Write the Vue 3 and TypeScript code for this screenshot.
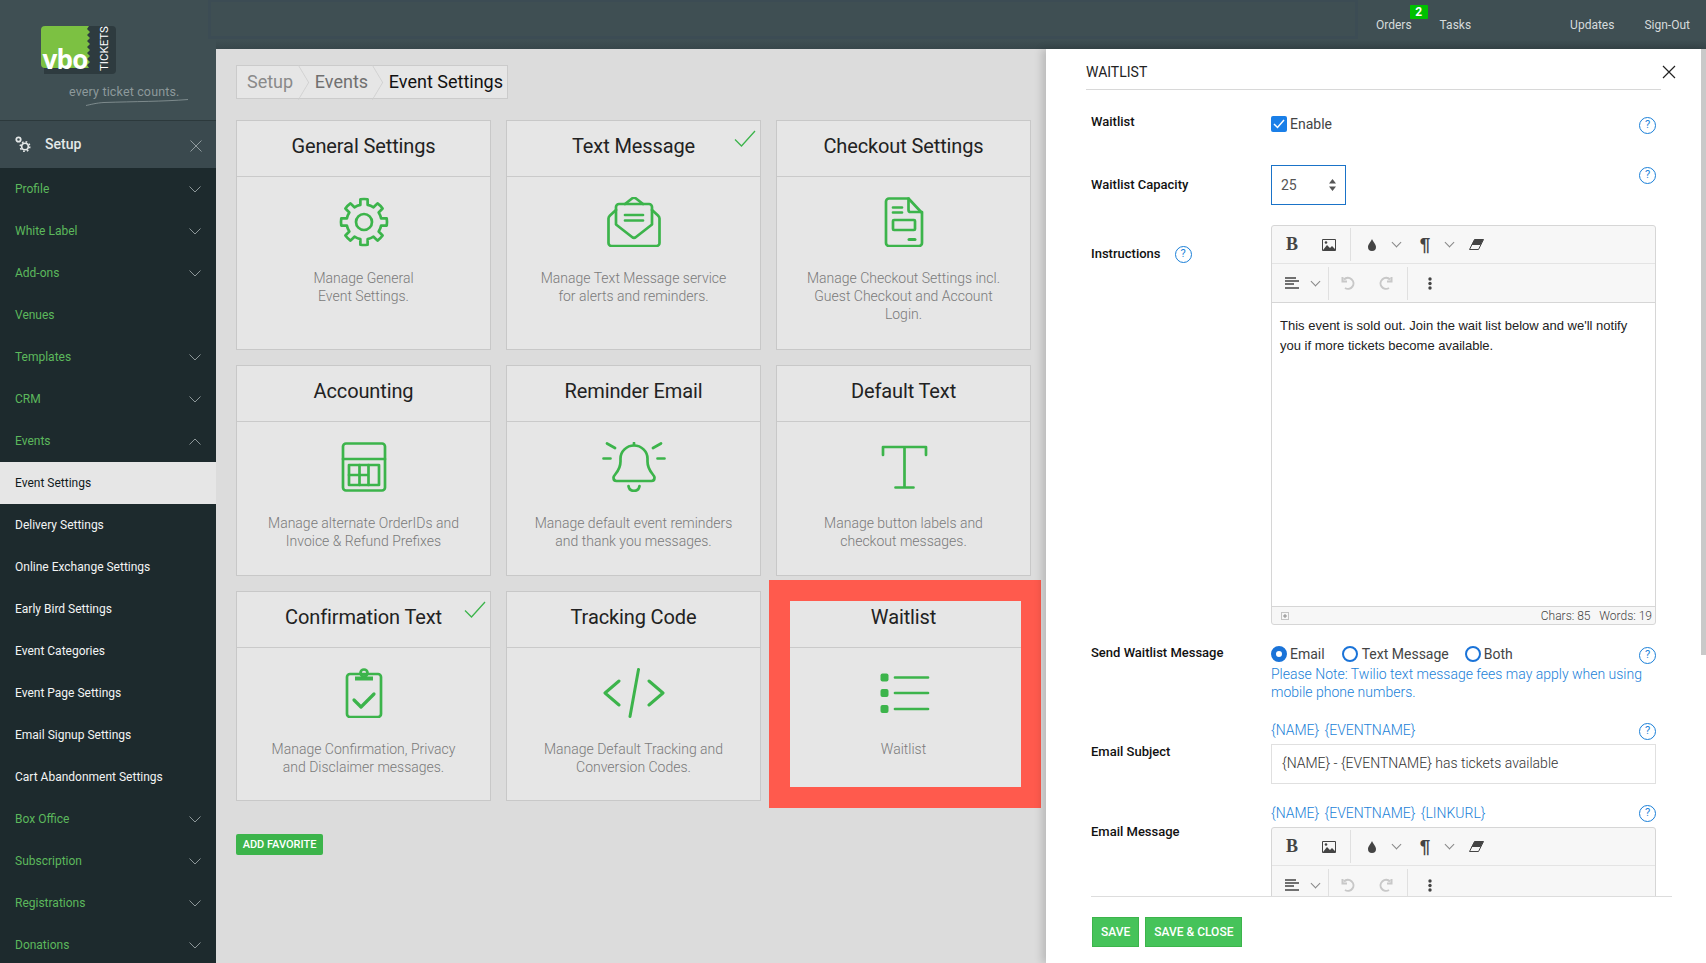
<template>
  <div class="page">
    <aside class="sidebar">
      <div class="logo">
        <svg width="216" height="120" viewBox="0 0 216 120">
          <path d="M47 26h68a4 4 0 0 1 4 4v40a4 4 0 0 1-4 4H47z" fill="#2e3b3f" transform="translate(-3 0)" />
          <path d="M45 26h44l-2 3 3 3-3 3 3 3-3 3 3 3-3 3 3 3-3 3 3 3-3 3 3 3-3 3 2 3H45a4 4 0 0 1-4-4V30a4 4 0 0 1 4-4z" fill="#7cc142" />
          <text x="42.5" y="68.500" class="logo-vbo">vbo</text>
          <text x="0" y="0" transform="translate(108 71) rotate(-90)" class="logo-tickets">TICKETS</text>
          <text x="69" y="96" class="logo-tag">every ticket counts.</text>
          <path d="M86 105.500c5-1 10-2.500 18-3 30-1 60-1 84-3" fill="none" stroke="#8d999b" stroke-width="0.8" />
        </svg>
      </div>
      <div class="setup-row">
        <svg class="setup-gears" width="16" height="16" viewBox="0 0 16 16" fill="none" stroke="#e4e8e8">
          <circle cx="3.500" cy="3.500" r="2.200" stroke-width="1.800" />
          <circle cx="10" cy="10.500" r="3.300" stroke-width="1.600" />
          <circle cx="10" cy="10.500" r="4.800" stroke-width="1.500" stroke-dasharray="1.700 2.070" />
        </svg>
        <span>Setup</span>
        <svg class="setup-x" width="12" height="12" viewBox="0 0 12 12" stroke="#9aa5a7" stroke-width="0.9">
          <path d="M0.500 0.500l11 11M11.500 0.500l-11 11" />
        </svg>
      </div>
      <ul class="side-nav">
        <li
          v-for="item in navItems"
          :key="item.label"
          :class="{ child: item.child, active: item.active }"
        >
          <span>{{ item.label }}</span>
          <svg v-if="item.chevron" width="12" height="7" viewBox="0 0 12 7" fill="none" stroke="#98a3a5" stroke-width="0.9">
            <path :d="item.chevron === 'up' ? 'M0.500 6.500L6 1l5.500 5.500' : 'M0.500 0.500L6 6l5.500-5.500'" />
          </svg>
        </li>
      </ul>
    </aside>

    <div class="right-col">
      <header class="topbar">
        <div class="search-box"></div>
        <nav class="top-nav">
          <a class="orders">Orders<b class="badge">2</b></a>
          <a class="tasks">Tasks</a>
          <a class="updates">Updates</a>
          <a class="signout">Sign-Out</a>
        </nav>
      </header>

      <div class="content">
        <main class="main">
          <div class="crumbs">
            <span class="crumb">Setup</span>
            <span class="crumb mid">Events</span>
            <span class="crumb current">Event Settings</span>
          </div>

          <div class="cards">
            <section v-for="card in cards" :key="card.title" class="card">
              <h2>{{ card.title }}</h2>
              <svg v-if="card.done" class="done" width="22" height="17" viewBox="0 0 22 17" fill="none" stroke="#3cb44b" stroke-width="1.300">
                <path d="M1 9.500L7.500 16 21 1" />
              </svg>
              <div class="card-body">
                <svg
                  width="64"
                  height="50"
                  viewBox="0 0 64 50"
                  fill="none"
                  stroke="#3cb44b"
                  stroke-width="2.700"
                  stroke-linecap="round"
                  stroke-linejoin="round"
                >
                  <template v-if="card.icon === 'gear'">
                    <path :d="gearPath" />
                    <circle cx="32" cy="25" r="8" />
                  </template>
                  <template v-else-if="card.icon === 'mail'">
                    <path d="M14 13l-6 5.500c-1 1-1.500 2-1.500 3V46a3 3 0 0 0 3 3h45a3 3 0 0 0 3-3V21.500c0-1-.5-2-1.500-3L50 13" />
                    <path d="M14 27.500V10a3 3 0 0 1 3-3h30a3 3 0 0 1 3 3v17.500L34 40a3 3 0 0 1-4 0L14 27.500z" />
                    <path d="M23 7l7-5.500a3 3 0 0 1 4 0L41 7" />
                    <path d="M23 18h18M23 23.500h18" />
                  </template>
                  <template v-else-if="card.icon === 'doc'">
                    <path d="M17 1.500h19.500L50 16v30a3 3 0 0 1-3 3H17a3 3 0 0 1-3-3V4.500a3 3 0 0 1 3-3z" />
                    <path d="M36.500 1.500V13a2 2 0 0 0 2 2H50" />
                    <path d="M21 10.500h9M21 15.500h9" />
                    <rect x="21" y="23" width="22" height="10" rx="1" />
                    <path d="M37 42.500h6" stroke-width="3" />
                  </template>
                  <template v-else-if="card.icon === 'table'">
                    <rect x="11" y="1.500" width="42" height="47" rx="3" />
                    <path d="M11 17h42" />
                    <rect x="17" y="23" width="30" height="20" />
                    <path d="M27.500 23v20M36.500 23v20M17 33h19.500" />
                  </template>
                  <template v-else-if="card.icon === 'bell'">
                    <path d="M11.500 35.500c0-3 7-6 7-16v-3c0-7 6-13 13.500-13s13.500 6 13.500 13v3c0 10 7 13 7 16 0 2-1 3.500-3 3.500H14.500c-2 0-3-1.500-3-3.500z" />
                    <path d="M32 1v2M26.500 44c1 6.500 10 6.500 11 0" />
                    <path d="M1.500 16.500h7M55.500 16.500h7M5 1.500l8 4.500M59 1.500l-8 4.500" />
                  </template>
                  <template v-else-if="card.icon === 'clipboard'">
                    <rect x="15" y="6" width="34" height="43" rx="3" />
                    <path d="M23 10.500h18" stroke-width="4" stroke-linecap="butt" />
                    <circle cx="32" cy="5" r="3.500" />
                    <path d="M22 32l7 7 13-13" stroke-width="3.200" />
                  </template>
                  <template v-else-if="card.icon === 'code'">
                    <path d="M17 13L3 25l14 12M47 13l14 12-14 12M36.500 1.500L28 48.500" stroke-width="3" />
                  </template>
                  <template v-else-if="card.icon === 'text'">
                    <path d="M11 13V5h43v8M32.500 5v40.500M23.500 45.500h18" />
                  </template>
                  <template v-else>
                    <rect x="8.500" y="5.500" width="8" height="8" rx="2" fill="#3cb44b" stroke="none" />
                    <rect x="8.500" y="21" width="8" height="8" rx="2" fill="#3cb44b" stroke="none" />
                    <rect x="8.500" y="37" width="8" height="8" rx="2" fill="#3cb44b" stroke="none" />
                    <path d="M23 9.500h33M23 25h33M23 41h33" />
                  </template>
                </svg>
                <p>
                  <template v-for="(line, i) in card.lines" :key="i">{{ line }}<br /></template>
                </p>
              </div>
              <div v-if="card.icon === 'list'" class="highlight"></div>
            </section>
          </div>

          <button class="favorite">ADD FAVORITE</button>
        </main>

        <aside class="drawer">
          <div class="drawer-head">
            <h3>WAITLIST</h3>
            <svg class="close" width="14" height="14" viewBox="0 0 14 14" stroke="#222" stroke-width="1.200">
              <path d="M1 1l12 12M13 1L1 13" />
            </svg>
          </div>

          <div class="drawer-body">
            <div class="row row-enable">
              <label class="lbl">Waitlist</label>
              <div class="field spread">
                <div class="inline">
                  <span class="check">
                    <svg width="12" height="10" viewBox="0 0 12 10" fill="none" stroke="#fff" stroke-width="1.500">
                      <path d="M1 5l3.500 3.500L11 1" />
                    </svg>
                  </span>
                  <span>Enable</span>
                </div>
                <span class="help">?</span>
              </div>
            </div>

            <div class="row row-capacity">
              <label class="lbl">Waitlist Capacity</label>
              <div class="field spread">
                <div class="number">
                  <span>25</span>
                  <svg width="7" height="12" viewBox="0 0 7 12" fill="#555">
                    <path d="M3.500 0L7 4.500H0zM3.500 12L0 7.500h7z" />
                  </svg>
                </div>
                <span class="help">?</span>
              </div>
            </div>

            <div class="row row-instructions">
              <label class="lbl">Instructions <span class="help">?</span></label>
              <div class="field">
                <div class="editor">
                  <div class="tb-row">
                    <span class="tb b">B</span>
                    <span class="tb">
                      <svg width="14" height="12" viewBox="0 0 14 12"><path d="M0.500 0.500h13v11H0.500z" fill="none" stroke="#444" /><path d="M1 11l4-5 3 3 2-2 3 3v1z" fill="#444" /><circle cx="4" cy="3.500" r="1.300" fill="#444" /></svg>
                    </span>
                    <span class="tb-sep"></span>
                    <span class="tb w28 drop">
                      <svg width="8" height="12" viewBox="0 0 8 12" fill="#444"><path d="M4 0c1 3 4 5 4 8a4 4 0 0 1-8 0c0-3 3-5 4-8z" /></svg>
                    </span>
                    <span class="chev"></span>
                    <span class="tb w28 para">¶</span>
                    <span class="chev"></span>
                    <span class="tb w28 erase">
                      <svg width="15" height="11" viewBox="0 0 15 11"><path d="M5.500 0.500h9l-5 10H0.500z" fill="#f7f7f7" stroke="#444" /><path d="M5.500 0.500h9l-3 5.500H2.500z" fill="#444" /></svg>
                    </span>
                  </div>
                  <div class="tb-row second">
                    <span class="tb w28">
                      <svg width="14" height="12" viewBox="0 0 14 12" stroke="#444" stroke-width="1.600"><path d="M0 1h11M0 4h14M0 7h9M0 11h14" /></svg>
                    </span>
                    <span class="chev"></span>
                    <span class="tb-sep"></span>
                    <span class="tb w38">
                      <svg width="14" height="14" viewBox="0 0 14 14" fill="none" stroke="#c8c8c8" stroke-width="2"><path d="M3 3.500a5.500 5.500 0 1 1 1 8.500M1.500 1v4.500H6" /></svg>
                    </span>
                    <span class="tb w38">
                      <svg width="14" height="14" viewBox="0 0 14 14" fill="none" stroke="#c8c8c8" stroke-width="2"><path d="M11 3.500a5.500 5.500 0 1 0-1 8.500M12.500 1v4.500H8" /></svg>
                    </span>
                    <span class="tb-sep"></span>
                    <span class="tb w44">
                      <svg width="4" height="13" viewBox="0 0 4 13" fill="#444"><circle cx="2" cy="2" r="1.700" /><circle cx="2" cy="6.500" r="1.700" /><circle cx="2" cy="11" r="1.700" /></svg>
                    </span>
                  </div>
                  <div class="editor-text">
                    This event is sold out. Join the wait list below and we'll notify you if more tickets become available.
                  </div>
                  <div class="editor-foot">
                    <svg width="8" height="8" viewBox="0 0 8 8" fill="none" stroke="#777" stroke-width="0.800"><path d="M0.500 0.500h7v7h-7z" stroke-dasharray="1 1" /><path d="M3 3h2v2H3z" /></svg>
                    <span>Chars: 85 &nbsp;&nbsp;Words: 19</span>
                  </div>
                </div>
              </div>
            </div>

            <div class="row row-send">
              <label class="lbl">Send Waitlist Message</label>
              <div class="field">
                <div class="spread">
                  <div class="radios">
                    <span class="radio on"></span><span class="r-text r-email">Email</span>
                    <span class="radio"></span><span class="r-text r-sms">Text Message</span>
                    <span class="radio"></span><span class="r-text">Both</span>
                  </div>
                  <span class="help">?</span>
                </div>
                <p class="note">Please Note: Twilio text message fees may apply when using mobile phone numbers.</p>
              </div>
            </div>

            <div class="row row-subject">
              <label class="lbl">Email Subject</label>
              <div class="field">
                <div class="spread tokens">
                  <span>{NAME} {EVENTNAME}</span>
                  <span class="help">?</span>
                </div>
                <div class="text-input">{NAME} - {EVENTNAME} has tickets available</div>
              </div>
            </div>

            <div class="row row-message">
              <label class="lbl">Email Message</label>
              <div class="field">
                <div class="spread tokens">
                  <span>{NAME} {EVENTNAME} {LINKURL}</span>
                  <span class="help">?</span>
                </div>
                <div class="editor">
                  <div class="tb-row">
                    <span class="tb b">B</span>
                    <span class="tb">
                      <svg width="14" height="12" viewBox="0 0 14 12"><path d="M0.500 0.500h13v11H0.500z" fill="none" stroke="#444" /><path d="M1 11l4-5 3 3 2-2 3 3v1z" fill="#444" /><circle cx="4" cy="3.500" r="1.300" fill="#444" /></svg>
                    </span>
                    <span class="tb-sep"></span>
                    <span class="tb w28 drop">
                      <svg width="8" height="12" viewBox="0 0 8 12" fill="#444"><path d="M4 0c1 3 4 5 4 8a4 4 0 0 1-8 0c0-3 3-5 4-8z" /></svg>
                    </span>
                    <span class="chev"></span>
                    <span class="tb w28 para">¶</span>
                    <span class="chev"></span>
                    <span class="tb w28 erase">
                      <svg width="15" height="11" viewBox="0 0 15 11"><path d="M5.500 0.500h9l-5 10H0.500z" fill="#f7f7f7" stroke="#444" /><path d="M5.500 0.500h9l-3 5.500H2.500z" fill="#444" /></svg>
                    </span>
                  </div>
                  <div class="tb-row second">
                    <span class="tb w28">
                      <svg width="14" height="12" viewBox="0 0 14 12" stroke="#444" stroke-width="1.600"><path d="M0 1h11M0 4h14M0 7h9M0 11h14" /></svg>
                    </span>
                    <span class="chev"></span>
                    <span class="tb-sep"></span>
                    <span class="tb w38">
                      <svg width="14" height="14" viewBox="0 0 14 14" fill="none" stroke="#c8c8c8" stroke-width="2"><path d="M3 3.500a5.500 5.500 0 1 1 1 8.500M1.500 1v4.500H6" /></svg>
                    </span>
                    <span class="tb w38">
                      <svg width="14" height="14" viewBox="0 0 14 14" fill="none" stroke="#c8c8c8" stroke-width="2"><path d="M11 3.500a5.500 5.500 0 1 0-1 8.500M12.500 1v4.500H8" /></svg>
                    </span>
                    <span class="tb-sep"></span>
                    <span class="tb w44">
                      <svg width="4" height="13" viewBox="0 0 4 13" fill="#444"><circle cx="2" cy="2" r="1.700" /><circle cx="2" cy="6.500" r="1.700" /><circle cx="2" cy="11" r="1.700" /></svg>
                    </span>
                  </div>
                </div>
              </div>
            </div>
          </div>

          <div class="drawer-foot">
            <button>SAVE</button>
            <button>SAVE &amp; CLOSE</button>
          </div>
          <div class="scroll-thumb"></div>
        </aside>
      </div>
    </div>
  </div>
</template>

<script setup lang="ts">
interface NavItem {
  label: string
  chevron?: 'up' | 'down'
  child?: boolean
  active?: boolean
}

interface Card {
  title: string
  icon: string
  lines: string[]
  done?: boolean
}

const navItems: NavItem[] = [
  { label: 'Profile', chevron: 'down' },
  { label: 'White Label', chevron: 'down' },
  { label: 'Add-ons', chevron: 'down' },
  { label: 'Venues' },
  { label: 'Templates', chevron: 'down' },
  { label: 'CRM', chevron: 'down' },
  { label: 'Events', chevron: 'up' },
  { label: 'Event Settings', child: true, active: true },
  { label: 'Delivery Settings', child: true },
  { label: 'Online Exchange Settings', child: true },
  { label: 'Early Bird Settings', child: true },
  { label: 'Event Categories', child: true },
  { label: 'Event Page Settings', child: true },
  { label: 'Email Signup Settings', child: true },
  { label: 'Cart Abandonment Settings', child: true },
  { label: 'Box Office', chevron: 'down' },
  { label: 'Subscription', chevron: 'down' },
  { label: 'Registrations', chevron: 'down' },
  { label: 'Donations', chevron: 'down' }
]

const cards: Card[] = [
  { title: 'General Settings', icon: 'gear', lines: ['Manage General', 'Event Settings.'] },
  { title: 'Text Message', icon: 'mail', done: true, lines: ['Manage Text Message service', 'for alerts and reminders.'] },
  { title: 'Checkout Settings', icon: 'doc', lines: ['Manage Checkout Settings incl.', 'Guest Checkout and Account', 'Login.'] },
  { title: 'Accounting', icon: 'table', lines: ['Manage alternate OrderIDs and', 'Invoice & Refund Prefixes'] },
  { title: 'Reminder Email', icon: 'bell', lines: ['Manage default event reminders', 'and thank you messages.'] },
  { title: 'Default Text', icon: 'text', lines: ['Manage button labels and', 'checkout messages.'] },
  { title: 'Confirmation Text', icon: 'clipboard', done: true, lines: ['Manage Confirmation, Privacy', 'and Disclaimer messages.'] },
  { title: 'Tracking Code', icon: 'code', lines: ['Manage Default Tracking and', 'Conversion Codes.'] },
  { title: 'Waitlist', icon: 'list', lines: ['Waitlist'] }
]

// gear outline with 8 teeth around the middle of the icon box
const buildGear = () => {
  const pt = (r: number, deg: number) => {
    const a = ((deg - 90) * Math.PI) / 180
    return `${(32 + r * Math.cos(a)).toFixed(2)} ${(25 + r * Math.sin(a)).toFixed(2)}`
  }
  let d = ''
  for (let i = 0; i < 8; i++) {
    const c = i * 45
    d += `${i === 0 ? 'M' : 'A17.5 17.5 0 0 1 '}${pt(17.5, c - 12)}L${pt(23, c - 9)}A23 23 0 0 1 ${pt(23, c + 9)}L${pt(17.5, c + 12)}`
  }
  return d + `A17.5 17.5 0 0 1 ${pt(17.5, -12)}Z`
}

const gearPath = buildGear()
</script>

<style>
body {
  margin: 0;
  overflow: hidden;
}
</style>

<style scoped>
.page {
  display: flex;
  width: 1706px;
  height: 963px;
  overflow: hidden;
  font-family: Roboto, "Liberation Sans", sans-serif;
  background: #dcdcdc;
}

/* left column */
.sidebar {
  width: 216px;
  flex: none;
  background: #1d2a2d;
  position: relative;
  z-index: 2;
}

.logo {
  height: 120px;
  background: #3f4f53;
  border-bottom: 1px solid #2c393c;
}

.logo svg {
  display: block;
}

.logo-vbo {
  font: 700 26px "Open Sans", sans-serif;
  letter-spacing: -0.800px;
  fill: #fff;
}

.logo-tickets {
  font: 400 11.500px Roboto, sans-serif;
  fill: #fff;
}

.logo-tag {
  font: 400 12.500px Roboto, sans-serif;
  letter-spacing: 0.150px;
  fill: #8d999b;
}

.setup-row {
  height: 47px;
  box-sizing: border-box;
  padding: 0 14px 2px 15px;
  background: #3a494e;
  display: flex;
  align-items: center;
  color: #e4e8e8;
  font-size: 14px;
  font-weight: 500;
}

.setup-gears {
  margin-right: 14px;
}

.setup-x {
  margin-left: auto;
  margin-top: 4px;
}

.side-nav {
  list-style: none;
  margin: 0;
  padding: 0;
}

.side-nav li {
  height: 42px;
  padding: 0 15px;
  display: flex;
  align-items: center;
  justify-content: space-between;
  color: #5cb85c;
  font-size: 12px;
  font-weight: 400;
}

.side-nav li.child {
  color: #f2f4f4;
}

.side-nav li.active {
  background: #e6e6e6;
  color: #111a1c;
}

/* top + content */
.right-col {
  flex: 1;
  display: flex;
  flex-direction: column;
  min-width: 0;
}

.topbar {
  height: 49px;
  flex: none;
  background: linear-gradient(#3f4f53 0, #3f4f53 82%, #37464a 100%);
  display: flex;
  align-items: flex-start;
}

.search-box {
  width: 1150px;
  height: 39px;
  margin-left: -8px;
  flex: none;
  box-sizing: border-box;
  border: 3px solid #3c4c54;
  border-top-width: 2px;
  position: relative;
  z-index: 3;
}

.top-nav {
  display: flex;
  font-size: 12px;
  font-weight: 400;
  color: #d6dbdc;
  padding-top: 18px;
  line-height: 14px;
}

.top-nav a {
  position: relative;
}

.orders {
  margin-left: 18px;
}

.tasks {
  margin-left: 28px;
}

.updates {
  margin-left: 99px;
}

.signout {
  margin-left: 30px;
}

.badge {
  position: absolute;
  top: -13px;
  right: -16px;
  width: 18px;
  height: 14px;
  background: #00c000;
  color: #fff;
  font-size: 12px;
  line-height: 14px;
  text-align: center;
  border-radius: 1px;
}

.content {
  flex: 1;
  display: flex;
  min-height: 0;
}

/* card area */
.main {
  width: 830px;
  flex: none;
  box-sizing: border-box;
  padding: 16px 0 0 20px;
}

.crumbs {
  display: inline-flex;
  height: 34px;
  box-sizing: border-box;
  align-items: center;
  background: #e6e6e6;
  border: 1px solid #cbcbcb;
  font-size: 18px;
  line-height: 21px;
  color: #8a8a8a;
  padding: 0 4px 2px 10px;
}

.crumb {
  position: relative;
  padding-right: 21.700px;
}

.crumb.mid {
  color: #707070;
  padding-right: 20.700px;
}

.crumb:not(.current)::after {
  content: "";
  position: absolute;
  right: 4px;
  top: -0.500px;
  width: 24px;
  height: 24px;
  border-top: 1px solid #cfcfcf;
  border-right: 1px solid #cfcfcf;
  transform: scaleX(0.6) rotate(45deg);
}

.crumb.current {
  color: #111;
  padding-right: 0;
}

.cards {
  display: grid;
  grid-template-columns: repeat(3, 255px);
  grid-template-rows: 229.500px 210.500px 210px;
  column-gap: 15px;
  row-gap: 15.500px;
  margin-top: 21px;
}

.card {
  position: relative;
  box-sizing: border-box;
  background: #e6e6e6;
  border: 1.500px solid #c8c8c8;
  text-align: center;
}

.card h2 {
  margin: 0;
  height: 55.500px;
  line-height: 50px;
  box-sizing: border-box;
  font-size: 20px;
  font-weight: 400;
  letter-spacing: -0.120px;
  color: #222;
  border-bottom: 1px solid #cacaca;
}

.done {
  position: absolute;
  top: 9px;
  right: 4px;
}

.card-body {
  padding-top: 20px;
}

.card-body svg {
  display: block;
  margin: 0 auto;
}

.card-body p {
  margin: 22px 0 0;
  font-size: 14px;
  line-height: 18px;
  font-weight: 300;
  color: #7a7a7a;
}

.highlight {
  position: absolute;
  top: -12.500px;
  left: -8.500px;
  right: -10.500px;
  bottom: -7.500px;
  border: 21px solid #ff5a4d;
  border-right-width: 20px;
  pointer-events: none;
}

.favorite {
  display: block;
  margin-top: 33px;
  width: 87px;
  height: 21px;
  padding: 0;
  border: none;
  border-radius: 2px;
  background: #3cb44b;
  color: #fff;
  font: 500 11px Roboto, sans-serif;
}

/* waitlist panel */
.drawer {
  position: relative;
  flex: 1;
  display: flex;
  flex-direction: column;
  background: #fff;
  box-shadow: -4px 0 8px rgba(0, 0, 0, 0.16);
  padding-left: 40px;
  font-size: 14px;
  color: #444;
}

.drawer-head {
  display: flex;
  height: 41px;
  flex: none;
}

.drawer-head h3 {
  width: 575px;
  margin: 0;
  font-size: 14px;
  font-weight: 400;
  line-height: 46px;
  color: #222;
  border-bottom: 1px solid #d8d8d8;
  box-sizing: border-box;
}

.close {
  margin: 16px 0 0 1px;
}

.drawer-body {
  height: 806px;
  width: 580px;
  flex: none;
  overflow: hidden;
  padding-left: 5px;
  box-sizing: border-box;
}

.row {
  display: flex;
  align-items: flex-start;
  width: 565px;
}

.lbl {
  width: 180px;
  flex: none;
  display: flex;
  align-items: center;
  gap: 14px;
  font-size: 13px;
  line-height: 16px;
  font-weight: 500;
  color: #111;
}

.field {
  width: 385px;
  flex: none;
}

.spread {
  display: flex;
  justify-content: space-between;
  align-items: flex-start;
}

.inline {
  display: flex;
  align-items: center;
  gap: 3px;
  padding-top: 1px;
}

.help {
  width: 17px;
  height: 17px;
  flex: none;
  box-sizing: border-box;
  border: 1.300px solid #1a7fd8;
  border-radius: 50%;
  color: #1a7fd8;
  font-size: 11px;
  font-weight: 400;
  line-height: 14px;
  text-align: center;
  margin-top: 1.500px;
}

.row-enable {
  height: 20px;
  margin-top: 25px;
}

.row-enable .lbl {
  margin-top: -1px;
}

.check {
  width: 16px;
  height: 16px;
  background: #1a7fe8;
  border-radius: 2px;
  display: flex;
  align-items: center;
  justify-content: center;
}

.row-capacity {
  margin-top: 30px;
}

.row-capacity .lbl {
  padding-top: 12px;
}

.number {
  width: 75px;
  height: 40px;
  box-sizing: border-box;
  border: 1px solid #1a73c8;
  display: flex;
  align-items: center;
  justify-content: space-between;
  padding: 0 9px;
  color: #555;
}

.row-instructions {
  margin-top: 20px;
}

.row-instructions .lbl {
  padding-top: 19px;
}

.row-instructions .help {
  margin-top: 2px;
}

.editor {
  border: 1px solid #d6d6d6;
  border-radius: 3px;
  background: #f7f7f7;
}

.tb-row {
  display: flex;
  align-items: center;
  height: 37px;
  padding-left: 7px;
}

.tb-row.second {
  height: 38px;
  border-top: 1px solid #e4e4e4;
  border-bottom: 1px solid #d6d6d6;
}

.tb {
  width: 38px;
  height: 100%;
  display: flex;
  align-items: center;
  justify-content: center;
  flex: none;
}

.tb-row .tb:first-child {
  width: 26px;
}

.tb-row .b {
  font: 700 18px "Liberation Serif", serif;
  color: #444;
  margin-right: 5px;
}

.w28 {
  width: 28px;
}

.w38 {
  width: 38px;
}

.w44 {
  width: 44px;
}

.drop {
  margin-left: 7px;
}

.erase {
  margin-left: -2px;
}

.para {
  font: 700 19px "Liberation Sans", sans-serif;
  color: #444;
}

.chev {
  width: 6px;
  height: 6px;
  margin: -4px 11px 0 7px;
  flex: none;
  border-right: 1px solid #888;
  border-bottom: 1px solid #888;
  transform: rotate(45deg);
}

.second .chev {
  margin-right: 7px;
}

.tb-sep {
  width: 1px;
  height: 33px;
  background: #e0e0e0;
  flex: none;
  margin-left: 2px;
}

.editor-text {
  height: 303px;
  box-sizing: border-box;
  padding: 13px 8px;
  background: #fff;
  font: 13px/20px "Liberation Sans", Arial, sans-serif;
  color: #222;
}

.editor-foot {
  height: 17px;
  border-top: 1px solid #d6d6d6;
  display: flex;
  align-items: center;
  justify-content: space-between;
  padding: 0 3px 0 9px;
  font-size: 12px;
  font-weight: 300;
  color: #444;
}

.row-send {
  margin-top: 20px;
}

.row-send .lbl {
  margin-top: 0;
}

.radios {
  display: flex;
  align-items: center;
  height: 20px;
  font-size: 14px;
  color: #444;
  margin-top: -1px;
}

.radio {
  width: 16px;
  height: 16px;
  box-sizing: border-box;
  border: 2px solid #1a73d8;
  border-radius: 50%;
  flex: none;
}

.radio.on {
  border: 5px solid #1a73d8;
}

.r-text {
  margin-left: 3px;
}

.r-email {
  margin-right: 17px;
}

.r-sms {
  margin-left: 4px;
  margin-right: 16px;
}

.note {
  margin: 1px 0 0;
  width: 380px;
  font-size: 14px;
  line-height: 18px;
  font-weight: 300;
  color: #1a7fd8;
}

.row-subject {
  margin-top: 20px;
}

.row-subject .lbl {
  padding-top: 23px;
}

.tokens {
  font-size: 14px;
  line-height: 18px;
  font-weight: 300;
  color: #1a7fd8;
  word-spacing: 2px;
}

.tokens .help {
  font-weight: 400;
  line-height: 14px;
}

.text-input {
  margin-top: 4px;
  height: 40px;
  box-sizing: border-box;
  border: 1.500px solid #e0e0e0;
  line-height: 37px;
  padding-left: 10px;
  font-weight: 300;
  color: #333;
}

.row-message {
  margin-top: 20px;
}

.row-message .lbl {
  padding-top: 20px;
}

.row-message .editor {
  margin-top: 5px;
}

.drawer-foot {
  border-top: 1px solid #ddd;
  margin-left: 5px;
  width: 580px;
  padding: 20px 0 0 1px;
  display: flex;
  gap: 6px;
}

.drawer-foot button {
  height: 30px;
  padding: 0 8px;
  border: 1px solid #3cb44b;
  background: #46c35a;
  color: #fff;
  font: 500 12px Roboto, sans-serif;
}

.scroll-thumb {
  position: absolute;
  top: 0;
  right: 0;
  width: 5px;
  height: 606px;
  background: #c9c9c9;
}
</style>
